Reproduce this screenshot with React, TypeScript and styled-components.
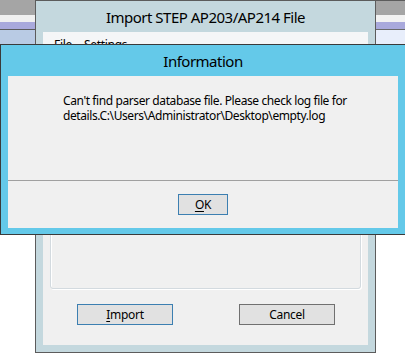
import React from "react";
import styled, { createGlobalStyle } from "styled-components";

const GlobalStyle = createGlobalStyle`
  html, body {
    margin: 0;
    padding: 0;
    background: #ffffff;
  }

  body {
    font-family: "Noto Sans", "Open Sans", sans-serif;
    color: #000000;
  }
`;

const Desktop = styled.div`
  position: relative;
  display: flex;
  width: 405px;
  height: 353px;
  overflow: hidden;
  background: #ffffff;
`;

const SideStrip = styled.div<{ $width: number }>`
  display: flex;
  flex-direction: column;
  flex-shrink: 0;
  width: ${(p) => p.$width}px;
`;

const Band = styled.div<{ $h: number; $bg: string }>`
  height: ${(p) => p.$h}px;
  background: ${(p) => p.$bg};
`;

const Window = styled.div`
  display: flex;
  flex-direction: column;
  flex-shrink: 0;
  box-sizing: border-box;
  width: 341px;
  height: 353px;
  padding: 0 7px 7px;
  border: 1px solid #5c5c5c;
  background: #c4d8de;
`;

const TitleBar = styled.div`
  display: flex;
  align-items: center;
  justify-content: center;
  flex-shrink: 0;
  height: 31px;
  padding-top: 1px;
  box-sizing: border-box;
  font-size: 15px;
  letter-spacing: -0.5px;
  color: #000000;
  white-space: nowrap;
`;

const Client = styled.div`
  display: flex;
  flex-direction: column;
  flex: 1;
  background: #f0f0f0;
`;

const MenuBar = styled.div`
  display: flex;
  align-items: center;
  height: 20px;
  padding: 2px 0 0 5px;
  background: #f5f6f7;
  font-size: 12px;
  letter-spacing: -0.3px;
`;

const MenuItem = styled.span`
  padding: 0 6px;
`;

const Body = styled.div`
  display: flex;
  flex-direction: column;
  flex: 1;
  padding: 0 7px;
`;

const GroupBox = styled.div`
  flex: 1;
  margin-top: 8px;
  border: 1px solid #d3dadf;
  border-radius: 3px;
  box-shadow: inset 1px 1px 0 #ffffff, 1px 1px 0 #ffffff;
`;

const ButtonRow = styled.div`
  display: flex;
  gap: 66px;
  margin: 15px 0 20px;
  padding-left: 27px;
`;

const Button = styled.button<{ $default?: boolean; $width: number }>`
  box-sizing: border-box;
  width: ${(p) => p.$width}px;
  height: 21px;
  padding: 0;
  border: 1px solid ${(p) => (p.$default ? "#3c7fb1" : "#707070")};
  background: #e1e1e1;
  font-family: inherit;
  font-size: 12px;
  letter-spacing: -0.3px;
  color: #000000;

  u {
    text-decoration-thickness: 1px;
    text-underline-offset: 2px;
  }
`;

const Dialog = styled.div`
  position: absolute;
  top: 44px;
  left: 0;
  display: flex;
  flex-direction: column;
  box-sizing: border-box;
  width: 407px;
  height: 191px;
  padding: 0 8px 6px 7px;
  border: 1px solid #3a3a3a;
  background: #64c9e9;
`;

const MessageArea = styled.div`
  height: 104px;
  box-sizing: border-box;
  padding: 17px 0 0 55px;
  font-size: 12px;
  line-height: 15px;
  letter-spacing: -0.4px;
  color: #000000;
  white-space: nowrap;
`;

const MessageLine = styled.div``;

const Separator = styled.div`
  height: 1px;
  background: #a0a0a0;
`;

const DialogButtons = styled.div`
  display: flex;
  align-items: center;
  justify-content: center;
  flex: 1;
`;

const leftBands = [
  { h: 15, bg: "#a5a5a5" },
  { h: 7, bg: "#f0f0f0" },
  { h: 7, bg: "#a9a9dc" },
  { h: 1, bg: "#5c5c5c" },
  { h: 14, bg: "#b9cbe4" },
];

const rightBands = [
  { h: 1, bg: "#5c5c5c" },
  { h: 14, bg: "#a5a5a5" },
  { h: 7, bg: "#f2f2f2" },
  { h: 7, bg: "#a9a9dc" },
  { h: 1, bg: "#6a6a6a" },
  { h: 14, bg: "#e8eefb" },
];

const messageLines = [
  "Can't find parser database file. Please check log file for",
  "details.C:\\Users\\Administrator\\Desktop\\empty.log",
];

const App = () => {
  return (
    <Desktop>
      <GlobalStyle />
      <SideStrip $width={35}>
        {leftBands.map((b, i) => (
          <Band key={i} $h={b.h} $bg={b.bg} />
        ))}
      </SideStrip>
      <Window>
        <TitleBar>Import STEP AP203/AP214 File</TitleBar>
        <Client>
          <MenuBar>
            <MenuItem>File</MenuItem>
            <MenuItem>Settings</MenuItem>
          </MenuBar>
          <Body>
            <GroupBox />
            <ButtonRow>
              <Button $default $width={96}>
                <u>I</u>mport
              </Button>
              <Button $width={96}>Cancel</Button>
            </ButtonRow>
          </Body>
        </Client>
      </Window>
      <SideStrip $width={29}>
        {rightBands.map((b, i) => (
          <Band key={i} $h={b.h} $bg={b.bg} />
        ))}
      </SideStrip>
      <Dialog>
        <TitleBar>Information</TitleBar>
        <Client>
          <MessageArea>
            {messageLines.map((line) => (
              <MessageLine key={line}>{line}</MessageLine>
            ))}
          </MessageArea>
          <Separator />
          <DialogButtons>
            <Button $default $width={50}>
              <u>O</u>K
            </Button>
          </DialogButtons>
        </Client>
      </Dialog>
    </Desktop>
  );
};

export default App;
